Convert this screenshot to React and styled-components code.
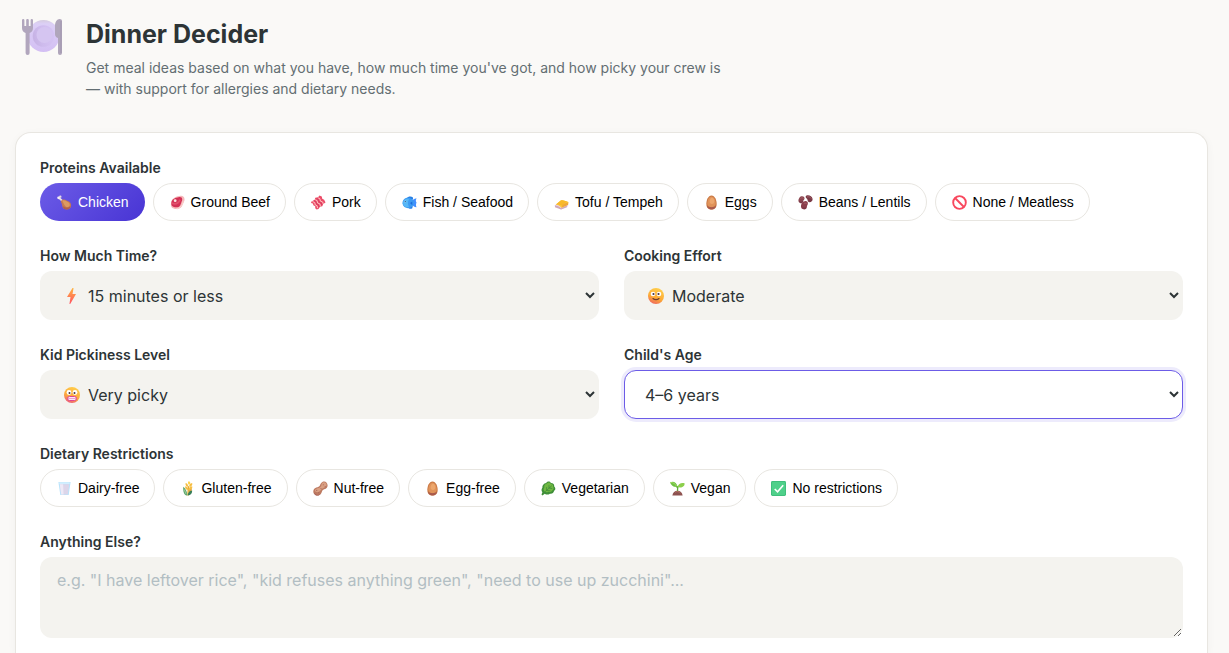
import React, { useState } from "react";
import styled, { createGlobalStyle } from "styled-components";

const proteins = [
  { name: "Chicken", icon: "chicken" },
  { name: "Ground Beef", icon: "beef" },
  { name: "Pork", icon: "bacon" },
  { name: "Fish / Seafood", icon: "fish" },
  { name: "Tofu / Tempeh", icon: "tofu" },
  { name: "Eggs", icon: "egg" },
  { name: "Beans / Lentils", icon: "beans" },
  { name: "None / Meatless", icon: "none" },
];

const diets = [
  { name: "Dairy-free", icon: "milk" },
  { name: "Gluten-free", icon: "wheat" },
  { name: "Nut-free", icon: "peanut" },
  { name: "Egg-free", icon: "egg" },
  { name: "Vegetarian", icon: "leaf" },
  { name: "Vegan", icon: "sprout" },
  { name: "No restrictions", icon: "check" },
];

const drawings = {
  chicken: (
    <>
      <path d="M4 6 12 13" stroke="#e9dfe8" strokeWidth="4" strokeLinecap="round" />
      <circle cx="3.5" cy="6" r="3" fill="#f4edf4" />
      <circle cx="7" cy="3.500" r="2.600" fill="#e6dce6" />
      <path d="M9 12c3-4 9-2 14 1 5 2 8 6 7 11-1 6-8 8-14 6-6-3-4-9-7-14-1-2-1-3 0-4z" fill="#c67a52" />
      <path d="M11 12c4-2 9 1 12 3 4 2 5 5 4 8-3 4-8 3-10 0-3-4-3-7-6-11z" fill="#dc9a62" />
      <path d="M13 24c5 4 12 4 16 0-1 6-8 8-13 6-2-1-3-3-3-6z" fill="#b05f4c" />
    </>
  ),
  beef: (
    <>
      <path d="M20 2c6-2 11 1 11 7 0 5-2 7-4 12-2 6-7 10-14 9C6 29 1 26 2 19c0-6 2-9 6-12 3-3 7-4 12-5z" fill="#f5b7b9" />
      <path d="M18 5c4-2 8 0 8 4 0 4-2 6-3 10-2 5-5 8-10 7-6 0-11-3-10-8 0-5 2-8 6-10 3-2 6-2 9-3z" fill="#d33155" />
      <path d="M4 15c6 4 13 1 16-6l3 2c-2 8-12 12-19 8z" fill="#e2506c" />
      <circle cx="11" cy="12" r="3" fill="#fbe3e0" />
      <path d="M28 12c0 7-5 16-14 17" fill="none" stroke="#fbd8d2" strokeWidth="2" />
    </>
  ),
  bacon: (
    <>
      <path
        d="M1 14 8 10l1-4 6-1 3-4 5 2 1 5 4 2 3 6-5 3-2 5-5 1-3 5-4 1-3-3 0-4-4-2-1-4-4-1z"
        fill="#ec4d69"
      />
      <path
        d="m3 14 5 2 1 5 4 2 1 5M9 10l4 2 1 5 5 2 1 5M15 6l4 2 1 5 5 2 1 4"
        fill="none"
        stroke="#ffcbc4"
        strokeWidth="2"
        strokeLinejoin="round"
      />
      <path
        d="m6 12 4 2 2 5 4 2 1 5M12 8l4 2 1 5 5 2 1 5"
        fill="none"
        stroke="#c72f5b"
        strokeWidth="1.200"
      />
    </>
  ),
  fish: (
    <>
      <path d="M10 7c3-5 10-5 13-2l1 5zM12 25c2 5 7 5 10 3l1-5z" fill="#267fe5" />
      <path d="M20 14c3-2 5-7 11-7-2 5-2 6 0 9-1 3-2 6 0 10-5 0-8-4-11-7z" fill="#438fff" />
      <path d="M1 18C1 10 6 6 13 6s12 5 13 11c-2 7-7 11-13 11S2 24 1 18z" fill="#3d9bf2" />
      <path d="M2 16C4 9 10 7 15 9c-3 5-3 11 0 16C8 28 2 24 2 16z" fill="#57b7f6" />
      <circle cx="7" cy="14" r="2" fill="#b9e2ff" />
      <circle cx="7" cy="14" r="1.400" fill="#174174" />
      <path d="m17 17 5-3v8z" fill="#1e6cdd" />
    </>
  ),
  tofu: (
    <>
      <path d="M1 22 12 16l19 5-3 5-13 5z" fill="#e9d5ed" />
      <path d="M2 22c5 1 9 3 13 6l13-6-1 4-12 5L2 26z" fill="#cfa9b8" />
      <path d="M4 20 15 11c5 0 10 1 16 4l-1 6-14 6c-4-4-8-6-12-7z" fill="#ffc83d" />
      <path d="M4 20 15 11c5 0 10 1 14 4-6 1-9 4-12 8-4-2-8-3-13-3z" fill="#f7b92b" />
      <path d="M17 23c3-4 7-6 13-7v5l-14 6z" fill="#eea83b" />
    </>
  ),
  egg: (
    <>
      <path d="M16 1c7 0 11 10 11 18 0 8-5 12-11 12S5 27 5 19C5 11 9 1 16 1z" fill="#c97742" />
      <path d="M16 3c5 0 9 8 9 15 0 5-4 8-9 8s-9-3-9-8c0-7 4-15 9-15z" fill="#e0935a" />
      <path d="M17 6c3 0 5 4 5 8 0 3-2 5-5 5s-5-2-5-5c0-4 2-8 5-8z" fill="#eda76d" />
      <path d="M6 23c3 4 17 4 20 0-1 5-5 8-10 8S7 28 6 23z" fill="#a95a4c" />
    </>
  ),
  beans: (
    <>
      <path d="M3 6c3-5 11-4 11 1 0 3-3 4-3 7-1 4-4 5-7 3-4-2-4-7-1-11z" fill="#8b4550" />
      <path d="M18 1c5-2 12 1 13 7 1 5-4 9-8 7-3-1-2-5-4-7-3-2-4-5-1-7z" fill="#7a3a46" />
      <path d="M12 14c5-3 10 0 9 4 0 3-2 4-2 7 0 5-5 7-9 5-5-2-4-9-2-12 1-2 2-3 4-4z" fill="#8c3e4b" />
      <g fill="none" stroke="#a8626a" strokeWidth="2" strokeLinecap="round">
        <path d="M6 7c1-2 4-2 5 0M20 4c3-1 6 0 8 3M13 18c1-1 4-1 5 0" />
      </g>
      <path d="M3 14c2 2 5 2 7 0M10 27c2 2 5 2 7 0" fill="none" stroke="#6f3242" strokeWidth="2" />
    </>
  ),
  none: (
    <g fill="none" stroke="#f8485e" strokeWidth="4">
      <circle cx="16" cy="16" r="13.500" />
      <path d="m7 7 18 18" />
    </g>
  ),
  milk: (
    <>
      <path d="M3 2h26l-4 28H7z" fill="#b9e3fb" />
      <path d="M6 7h20l-3 22H9z" fill="#dcd5e9" />
      <path d="M6 7h7l1 22H9z" fill="#eee9f6" />
      <path d="M5 3h22v3H5z" fill="#d8f1ff" />
    </>
  ),
  wheat: (
    <>
      <path d="m17 31 1-20" stroke="#e7ad35" strokeWidth="3" />
      <path d="M19 0c4 3 4 6 0 8-3-3-3-5 0-8z" fill="#ffd44d" />
      <path d="M12 4c4 1 6 5 6 8-5 0-7-3-6-8zM26 4c1 4-1 8-6 8-1-4 1-7 6-8zM11 11c5 1 7 5 7 8-5 0-8-3-7-8zM26 11c1 5-1 8-7 8-1-4 1-7 7-8z" fill="#f6be43" />
      <path d="M25 17c1 4-1 6-6 7-1-4 1-7 6-7z" fill="#dfa33a" />
      <path d="M7 12c6 5 8 11 9 19-7 0-10-8-9-19z" fill="#5da46c" />
      <path d="M26 20c0 6-3 10-9 11-1-6 3-10 9-11z" fill="#397f58" />
      <path d="m9 18 4 10" stroke="#9fd09b" strokeWidth="2" />
    </>
  ),
  peanut: (
    <>
      <path d="M20 2c7-3 12 3 11 9-1 5-6 6-10 8-2 2-2 5-4 8-3 5-11 5-15 0-3-5-1-11 5-13 4-1 6-2 8-5 1-3 2-5 5-7z" fill="#bd7a61" />
      <path d="M21 3c5-1 8 1 8 5 0 5-5 6-9 8-3 2-4 5-7 7-4 2-8 1-9-2 0-4 4-5 8-6 4-2 5-3 6-6 0-3 1-5 3-6z" fill="#d99f82" />
      <g fill="#a9675a">
        <circle cx="22" cy="8" r="1.200" />
        <circle cx="26" cy="12" r="1.200" />
        <circle cx="17" cy="16" r="1.200" />
        <circle cx="8" cy="20" r="1.200" />
        <circle cx="12" cy="25" r="1.200" />
      </g>
      <path d="M3 25c4 6 11 6 13 1-1 6-11 7-13 1z" fill="#a4605a" />
    </>
  ),
  leaf: (
    <>
      <path d="M11 4c3-4 8-4 10 0 5 0 8 3 7 7 4 4 3 8 0 10-1 5-5 7-9 6-4 3-8 2-11 0l-5 4-2-2 2-5c-3-3-2-7 0-10-1-5 3-9 8-10z" fill="#3f8f38" />
      <path d="M13 5c3-3 6-2 8 1 4 1 5 3 5 6 2 3 1 6-2 8-2 3-5 4-8 3-4 2-7 1-9-1-2-3-2-5 0-8-1-5 2-7 6-9z" fill="#6fb741" />
      <path d="M3 28 23 10M12 20v-7M12 20l8 1M17 15V9M17 15l7 1" fill="none" stroke="#3f8a3b" strokeWidth="1.600" />
    </>
  ),
  sprout: (
    <>
      <path d="M16 23c0-5 0-8 1-12M16 14c-2-4-4-5-7-6" fill="none" stroke="#5fae38" strokeWidth="3" />
      <path d="M0 3c7-4 14 0 16 9C9 14 3 10 0 3z" fill="#6fc143" />
      <path d="M31 5c1 7-7 11-15 8 2-7 8-10 15-8z" fill="#8ccf4c" />
      <path d="M1 3c6 0 10 3 13 8" stroke="#a3db64" strokeWidth="2" fill="none" />
      <path d="M5 31c1-6 5-10 11-10s10 4 11 10z" fill="#8d5250" />
      <path d="M11 24c3-2 8-2 11 1" stroke="#b77768" strokeWidth="2" fill="none" />
    </>
  ),
  check: (
    <>
      <rect x="0" y="0" width="32" height="32" rx="3" fill="#3fbf7c" />
      <rect x="2" y="2" width="28" height="28" rx="2" fill="#4fd08a" />
      <path d="m8 17 6 6L26 9" fill="none" stroke="#fff" strokeWidth="3.400" />
    </>
  ),
  bolt: (
    <>
      <defs>
        <linearGradient id="boltFill" x1="0" y1="0" x2="0" y2="1">
          <stop offset="0" stopColor="#ffb63e" />
          <stop offset="1" stopColor="#ff5263" />
        </linearGradient>
      </defs>
      <path d="M17 0 6 18h7l-2 13q0 2 2 0l11-19h-7l2-11q0-2-2-1z" fill="url(#boltFill)" />
    </>
  ),
  smile: (
    <>
      <defs>
        <linearGradient id="smileFill" x1="0.7" y1="0" x2="0.3" y2="1">
          <stop offset="0" stopColor="#ffd04c" />
          <stop offset="0.6" stopColor="#fdaa35" />
          <stop offset="1" stopColor="#ee665f" />
        </linearGradient>
      </defs>
      <circle cx="16" cy="16" r="16" fill="url(#smileFill)" />
      <circle cx="10" cy="12" r="4.600" fill="#fff" />
      <circle cx="22" cy="12" r="4.600" fill="#fff" />
      <circle cx="11" cy="12" r="2.200" fill="#46313f" />
      <circle cx="21" cy="12" r="2.200" fill="#46313f" />
      <path d="M10 21c3 3 9 3 12 0" fill="none" stroke="#703d2d" strokeWidth="2.200" strokeLinecap="round" />
    </>
  ),
  grimace: (
    <>
      <defs>
        <linearGradient id="grimaceFill" x1="0.7" y1="0" x2="0.3" y2="1">
          <stop offset="0" stopColor="#ffce4b" />
          <stop offset="0.6" stopColor="#fca83d" />
          <stop offset="1" stopColor="#ec5a79" />
        </linearGradient>
      </defs>
      <circle cx="16" cy="16" r="16" fill="url(#grimaceFill)" />
      <circle cx="10" cy="11" r="4.800" fill="#fff" />
      <circle cx="22" cy="11" r="4.800" fill="#fff" />
      <circle cx="11" cy="12" r="2" fill="#46313f" />
      <circle cx="21" cy="12" r="2" fill="#46313f" />
      <rect x="7" y="19" width="18" height="8" rx="4" fill="#fbe9f8" stroke="#e0458f" strokeWidth="2" />
      <path d="M8 23h16" stroke="#dc74b4" strokeWidth="1.200" />
    </>
  ),
};

const Emoji = ({ name, size = 15 }) => (
  <svg width={size} height={size} viewBox="0 0 32 32" aria-hidden="true">
    {drawings[name]}
  </svg>
);

const PlateIcon = () => (
  <svg width="40" height="36" viewBox="0 0 40 36" aria-hidden="true">
    <defs>
      <linearGradient id="plateRim" x1="0" y1="0" x2="0" y2="1">
        <stop offset="0" stopColor="#d5ccdf" />
        <stop offset="0.12" stopColor="#dccff6" />
        <stop offset="1" stopColor="#d3bff3" />
      </linearGradient>
      <linearGradient id="plateWell" x1="0" y1="0.6" x2="1" y2="0.4">
        <stop offset="0" stopColor="#c6b2e4" />
        <stop offset="0.4" stopColor="#cebbed" />
        <stop offset="1" stopColor="#d6c4f4" />
      </linearGradient>
    </defs>
    <circle cx="21.500" cy="17" r="16" fill="url(#plateRim)" />
    <circle cx="21.500" cy="17" r="10.800" fill="url(#plateWell)" />
    <circle cx="22.500" cy="16" r="8" fill="#d5c5f1" />
    <path
      d="M0 1.200a1.200 1.200 0 0 1 2.400 0V7h1.800V1.200a1.300 1.300 0 0 1 2.600 0V7h1.800V1.200a1.200 1.200 0 0 1 2.400 0V9c0 2.600-1.300 4.200-3.400 5v20a2 2 0 0 1-4 0V14C1.400 13.200 0 11.600 0 9z"
      fill="#b1a6bd"
    />
    <path d="M40 2v32a2 2 0 0 1-4 0V19c-2-.6-3-1.800-3-4V7c0-4 2-7 4.600-7C39.200 0 40 .8 40 2z" fill="#b0a6bb" />
    <path d="M39 2v32" stroke="#a197af" strokeWidth="1" />
  </svg>
);

const ChipGroup = ({ id, label, items, value, onToggle }) => (
  <Field role="group" aria-labelledby={id}>
    <Label as="span" id={id}>
      {label}
    </Label>
    <Chips>
      {items.map((item) => (
        <Chip
          key={item.name}
          type="button"
          $active={value.includes(item.name)}
          aria-pressed={value.includes(item.name)}
          onClick={() => onToggle(item.name)}
        >
          <Emoji name={item.icon} />
          {item.name}
        </Chip>
      ))}
    </Chips>
  </Field>
);

const SelectField = ({ id, label, icon, option, autoFocus }) => (
  <Field>
    <Label htmlFor={id}>{label}</Label>
    <SelectBox>
      <Select id={id} $icon={icon} autoFocus={autoFocus}>
        <option>{option}</option>
      </Select>
      {icon && (
        <SelectIcon>
          <Emoji name={icon} size={16} />
        </SelectIcon>
      )}
    </SelectBox>
  </Field>
);

const toggleItem = (list, name) =>
  list.includes(name) ? list.filter((el) => el !== name) : [...list, name];

const App = () => {
  const [protein, setProtein] = useState(["Chicken"]);
  const [diet, setDiet] = useState([]);

  return (
    <>
      <GlobalStyle />
      <Page>
        <Header>
          <HeaderIcon>
            <PlateIcon />
          </HeaderIcon>
          <HeaderText>
            <Title>Dinner Decider</Title>
            <Subtitle>
              Get meal ideas based on what you have, how much time you've got, and how picky your
              crew is — with support for allergies and dietary needs.
            </Subtitle>
          </HeaderText>
        </Header>
        <Card>
          <ChipGroup
            id="proteins"
            label="Proteins Available"
            items={proteins}
            value={protein}
            onToggle={(name) => setProtein(toggleItem(protein, name))}
          />
          <Columns>
            <SelectField id="time" label="How Much Time?" icon="bolt" option="15 minutes or less" />
            <SelectField id="effort" label="Cooking Effort" icon="smile" option="Moderate" />
            <SelectField id="picky" label="Kid Pickiness Level" icon="grimace" option="Very picky" />
            <SelectField id="age" label="Child's Age" option="4–6 years" autoFocus />
          </Columns>
          <ChipGroup
            id="diets"
            label="Dietary Restrictions"
            items={diets}
            value={diet}
            onToggle={(name) => setDiet(toggleItem(diet, name))}
          />
          <Field>
            <Label htmlFor="notes">Anything Else?</Label>
            <TextArea
              id="notes"
              placeholder={`e.g. "I have leftover rice", "kid refuses anything green", "need to use up zucchini"...`}
            />
          </Field>
        </Card>
      </Page>
    </>
  );
};

export default App;

const GlobalStyle = createGlobalStyle`
  * {
    box-sizing: border-box;
  }
  body {
    margin: 0;
    background-color: #faf9f7;
    color: #2d3436;
    font-family: Inter, "Liberation Sans", sans-serif;
  }
`;

const Page = styled.main`
  display: flex;
  flex-direction: column;
  min-height: 100vh;
  padding: 0 21px 0 15px;
`;

const Header = styled.header`
  display: flex;
  align-items: flex-start;
  gap: 24px;
  padding: 17px 7px 33px;
`;

const HeaderIcon = styled.div`
  display: flex;
  padding: 2px 0;
`;

const HeaderText = styled.div`
  max-width: 650px;
`;

const Title = styled.h1`
  margin: 0 0 6px;
  font-size: 25px;
  font-weight: 700;
  line-height: 34px;
`;

const Subtitle = styled.p`
  margin: 0;
  color: #636e72;
  font-size: 14px;
  line-height: 21px;
`;

const Card = styled.form`
  display: flex;
  flex: 1;
  flex-direction: column;
  gap: 24px;
  padding: 24px 24px 0;
  background-color: #fff;
  border: 1px solid #e8e6e1;
  border-bottom: none;
  border-radius: 16px 16px 0 0;
  box-shadow: 0 2px 8px rgba(0, 0, 0, 0.04);
`;

const Field = styled.div`
  display: flex;
  flex-direction: column;
  gap: 4px;
`;

const Label = styled.label`
  font-size: 14px;
  font-weight: 600;
  line-height: 22px;
`;

const Chips = styled.div`
  display: flex;
  flex-wrap: wrap;
  gap: 8px;
`;

const Chip = styled.button`
  display: flex;
  align-items: center;
  gap: 6px;
  height: 38px;
  padding: 0 15px 0 16px;
  border: 1px solid ${(props) => (props.$active ? "transparent" : "#e8e6e1")};
  border-radius: 19px;
  background: ${(props) =>
    props.$active ? "linear-gradient(135deg, #6c5ce7, #4834d4) border-box" : "#fff"};
  color: ${(props) => (props.$active ? "#fff" : "#000")};
  font-family: "Liberation Sans", Arial, sans-serif;
  font-size: 14px;
  cursor: pointer;
`;

const Columns = styled.div`
  display: grid;
  grid-template-columns: 1fr 1fr;
  gap: 24px 25px;
`;

const SelectBox = styled.div`
  position: relative;
`;

const SelectIcon = styled.span`
  position: absolute;
  top: 0;
  bottom: 0;
  left: 24px;
  display: flex;
  align-items: center;
  pointer-events: none;
`;

const Select = styled.select`
  display: block;
  width: 100%;
  height: 49px;
  padding: 0 16px 0 ${(props) => (props.$icon ? "43px" : "16px")};
  border: 1px solid transparent;
  border-radius: 12px;
  background-color: #f4f3ef;
  color: #2d3436;
  font-family: inherit;
  font-size: 16px;

  &:focus {
    outline: none;
    border-color: #6c5ce7;
    background-color: #fff;
    box-shadow: 0 0 0 3px rgba(108, 92, 231, 0.12);
  }
`;

const TextArea = styled.textarea`
  display: block;
  width: 100%;
  height: 81px;
  padding: 12px 16px;
  border: 1px solid transparent;
  border-radius: 12px;
  background-color: #f4f3ef;
  color: #2d3436;
  font-family: inherit;
  font-size: 16px;
  resize: vertical;

  &::placeholder {
    color: #b2bec3;
  }
`;
